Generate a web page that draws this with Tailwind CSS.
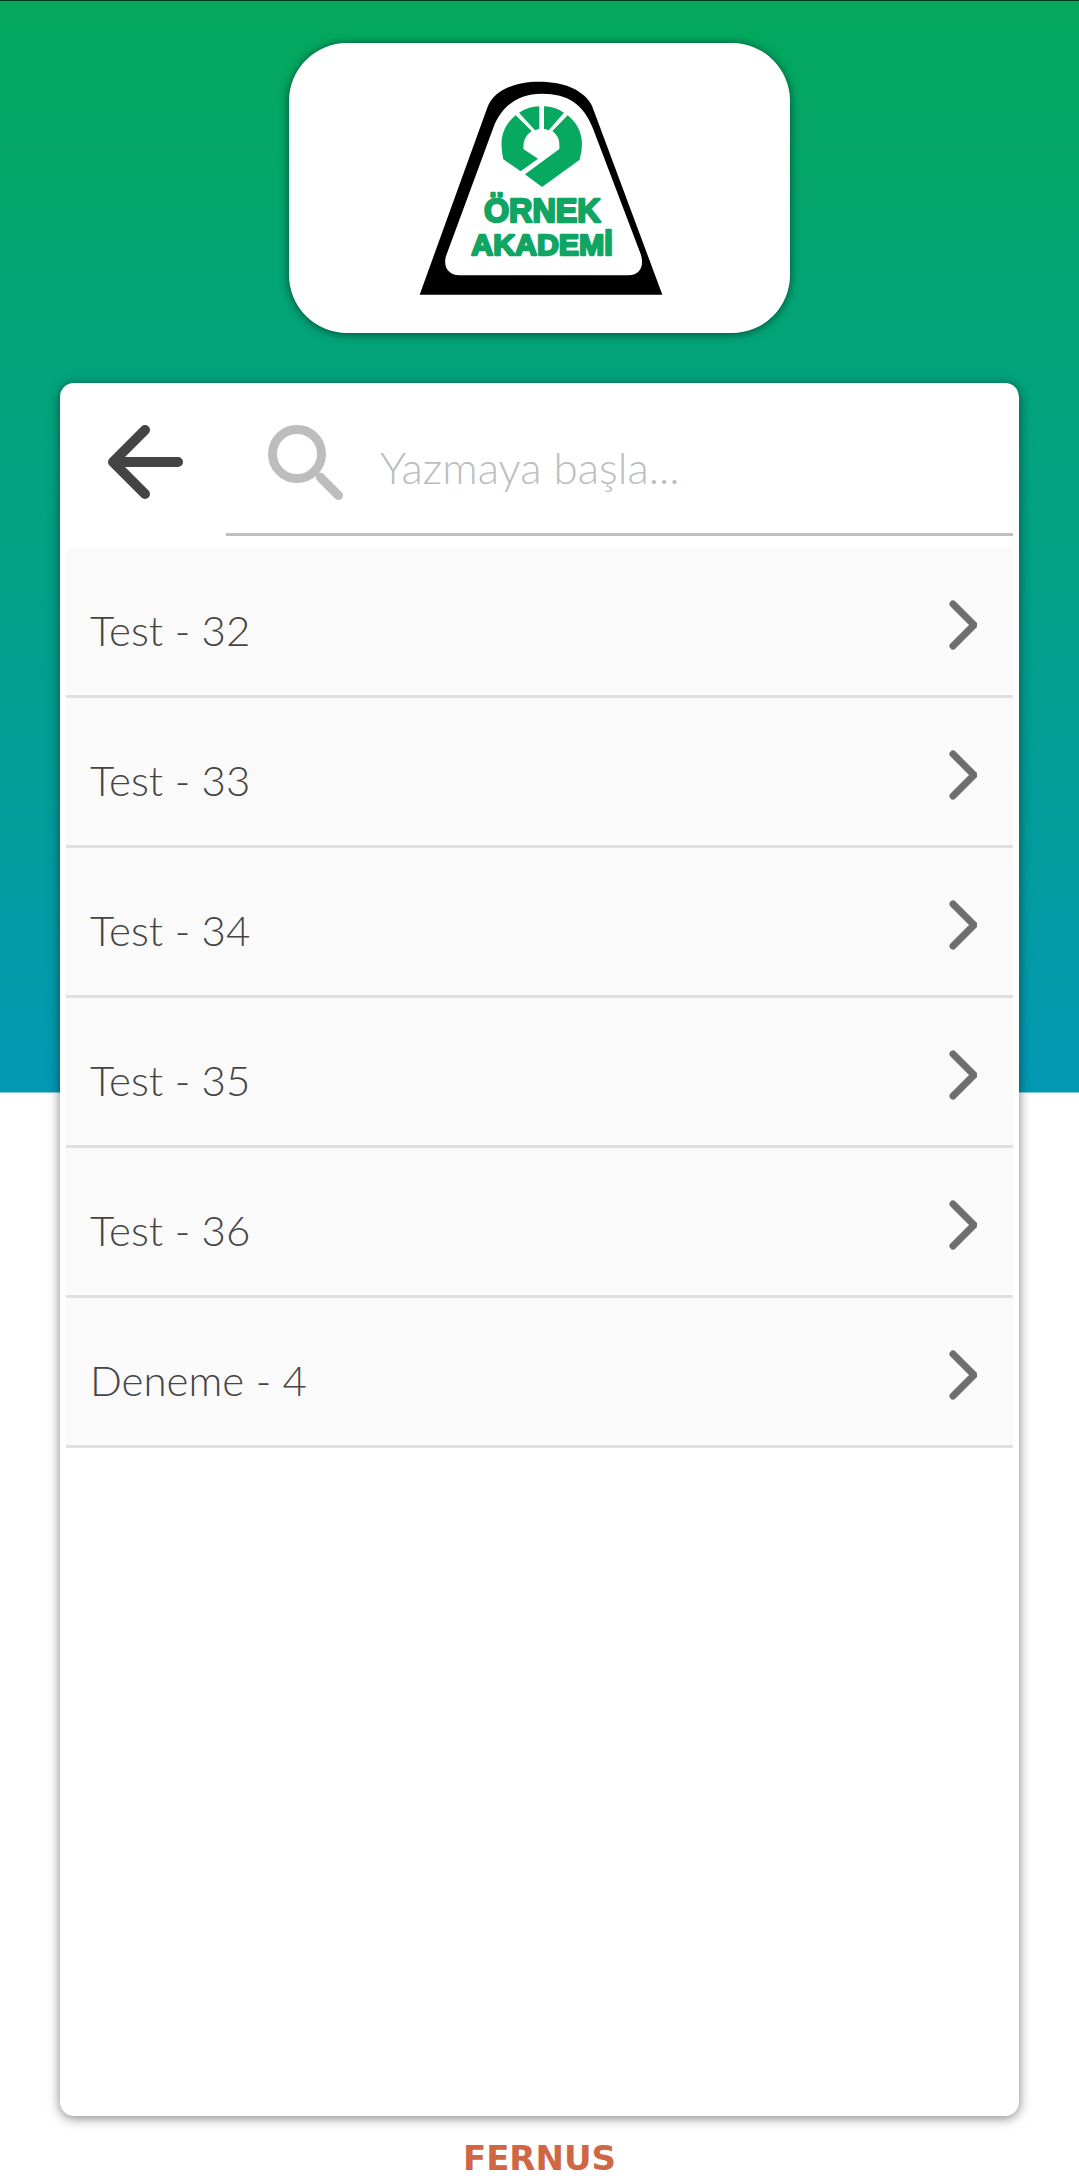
<!DOCTYPE html>
<html lang="tr">
<head>
<meta charset="utf-8">
<meta name="viewport" content="width=device-width, initial-scale=1">
<title>Örnek Akademi</title>
<script src="https://cdn.jsdelivr.net/npm/@tailwindcss/browser@4"></script>
</head>
<body class="bg-white">
<div class="flex min-h-screen flex-col items-center border-t border-[#063a1c] bg-[linear-gradient(to_bottom,#03a85c,#03a478_30%,#029f8c_60%,#0398b4)] bg-[length:100%_50%] bg-no-repeat font-['Lato',sans-serif] font-light text-[#444444]">

  <header class="mt-[42px] flex h-[290px] w-[46.5%] items-center justify-center rounded-[58px] bg-white shadow-[0_1px_10px_rgba(0,0,0,0.55)]">
    <svg class="ml-1 h-[214px] w-[244px]" viewBox="60 34 730 642" role="img" aria-label="Örnek Akademi">
      <path fill="#000" d="M61 675 L266 108 C288 62 344 36 420 36 C496 36 554 62 578 108 L789 675 Z"/>
      <path fill="#fff" d="M139 562 L282 174 C308 108 356 72 428 72 C506 72 552 104 580 174 L722 548 C738 588 722 617 686 617 L180 617 C148 615 132 594 139 562 Z"/>
      <g fill="#06a95f">
        <path d="M349 137 L397 184 C380 197 372 210 372 238 L416 267 L364 305 L312 269 C300 215 306 172 349 137 Z"/>
        <path d="M359 129 Q386 111 420 110 V177 L407 182 Z"/>
        <path d="M434 110 Q468 111 494 129 L448 182 L434 177 Z"/>
        <path d="M505 137 C548 172 556 217 541 270 L428 352 L377 314 L480 238 C482 210 475 197 459 184 Z"/>
      </g>
      <g fill="#10a562" stroke="#10a562" stroke-width="7" stroke-linejoin="round" font-family="Liberation Sans, sans-serif" font-weight="700" text-anchor="middle">
        <text x="429" y="458" font-size="97">ÖRNEK</text>
        <text x="428" y="557" font-size="91">AKADEMİ</text>
      </g>
    </svg>
  </header>

  <main class="mx-[60px] mt-[50px] flex flex-1 flex-col self-stretch rounded-[14px] bg-white px-1.5 shadow-[0_2px_12px_rgba(0,0,0,0.5)]">
    <div class="flex h-[153px]">
      <button type="button" aria-label="Geri" class="flex w-40 shrink-0 items-center pl-[42px] pt-1">
        <svg class="h-[74px] w-[75px]" viewBox="0 0 75 74" fill="none" stroke="#444444" stroke-width="10" stroke-linecap="round" stroke-linejoin="round"><path d="M37 5 L5 37 L37 69 M5 37 H70"/><path d="M10 32 L15 37 L10 42 Z" stroke-width="4" fill="#444444"/></svg>
      </button>
      <label class="flex min-w-0 flex-1 items-center border-b-3 border-[#c0c0c0] pl-[42px] pt-2">
        <svg class="h-[75px] w-[75px] shrink-0" viewBox="0 0 75 75" fill="none" stroke="#bdbdbd"><circle cx="29" cy="29" r="24.5" stroke-width="9"/><path d="M53 53 L70.500 70.500" stroke-width="9" stroke-linecap="round"/><path d="M46 46 L48.500 55 L56 48.500 Z" fill="#bdbdbd" stroke="none"/></svg>
        <input type="text" aria-label="Ara" placeholder="Yazmaya başla..." class="ml-[37px] mt-2.5 h-16 min-w-0 flex-1 text-[44px] outline-none placeholder:text-[#bdbdbd]">
      </label>
    </div>
    <nav class="mt-3" aria-label="Testler">
      <ul>
        <li><a href="#" class="flex h-[150px] items-center justify-between border-b-3 border-[#e0e0e0] bg-[#fafafa] pl-6 pr-9 pt-1.5"><span class="mt-3 text-[42px]">Test - 32</span><svg class="h-[50px] w-7" viewBox="0 0 28 50" fill="none" stroke="#6e6e6e" stroke-width="7" stroke-linecap="round" stroke-linejoin="round"><path d="M4 4 L25 25 L4 46"/></svg></a></li>
        <li><a href="#" class="flex h-[150px] items-center justify-between border-b-3 border-[#e0e0e0] bg-[#fafafa] pl-6 pr-9 pt-1.5"><span class="mt-3 text-[42px]">Test - 33</span><svg class="h-[50px] w-7" viewBox="0 0 28 50" fill="none" stroke="#6e6e6e" stroke-width="7" stroke-linecap="round" stroke-linejoin="round"><path d="M4 4 L25 25 L4 46"/></svg></a></li>
        <li><a href="#" class="flex h-[150px] items-center justify-between border-b-3 border-[#e0e0e0] bg-[#fafafa] pl-6 pr-9 pt-1.5"><span class="mt-3 text-[42px]">Test - 34</span><svg class="h-[50px] w-7" viewBox="0 0 28 50" fill="none" stroke="#6e6e6e" stroke-width="7" stroke-linecap="round" stroke-linejoin="round"><path d="M4 4 L25 25 L4 46"/></svg></a></li>
        <li><a href="#" class="flex h-[150px] items-center justify-between border-b-3 border-[#e0e0e0] bg-[#fafafa] pl-6 pr-9 pt-1.5"><span class="mt-3 text-[42px]">Test - 35</span><svg class="h-[50px] w-7" viewBox="0 0 28 50" fill="none" stroke="#6e6e6e" stroke-width="7" stroke-linecap="round" stroke-linejoin="round"><path d="M4 4 L25 25 L4 46"/></svg></a></li>
        <li><a href="#" class="flex h-[150px] items-center justify-between border-b-3 border-[#e0e0e0] bg-[#fafafa] pl-6 pr-9 pt-1.5"><span class="mt-3 text-[42px]">Test - 36</span><svg class="h-[50px] w-7" viewBox="0 0 28 50" fill="none" stroke="#6e6e6e" stroke-width="7" stroke-linecap="round" stroke-linejoin="round"><path d="M4 4 L25 25 L4 46"/></svg></a></li>
        <li><a href="#" class="flex h-[150px] items-center justify-between border-b-3 border-[#e0e0e0] bg-[#fafafa] pl-6 pr-9 pt-1.5"><span class="mt-3 text-[42px]">Deneme - 4</span><svg class="h-[50px] w-7" viewBox="0 0 28 50" fill="none" stroke="#6e6e6e" stroke-width="7" stroke-linecap="round" stroke-linejoin="round"><path d="M4 4 L25 25 L4 46"/></svg></a></li>
      </ul>
    </nav>
  </main>

  <footer class="flex h-[68px] items-end pb-1.5 font-['DejaVu_Sans',sans-serif] text-[34px] font-bold leading-10 text-[#cf6644]">FERNUS</footer>
</div>
</body>
</html>
